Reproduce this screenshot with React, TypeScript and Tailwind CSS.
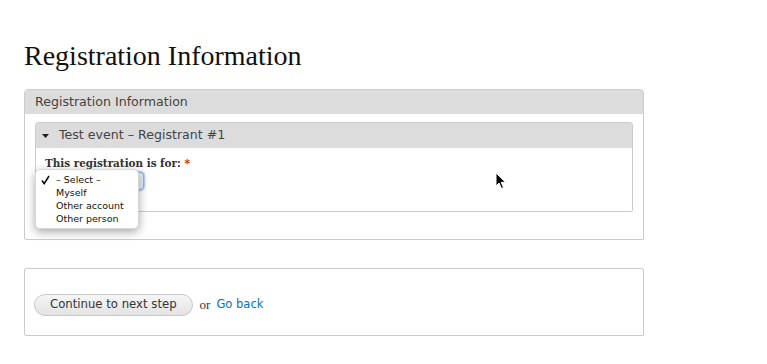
import React from "react";

const serif = { fontFamily: '"Liberation Serif", "DejaVu Serif", serif' };
const dserif = { fontFamily: '"DejaVu Serif", "Liberation Serif", serif' };

export default function App() {
  return (
    <div className="relative w-[767px] h-[364px] overflow-hidden bg-white text-[#333]" style={{ fontFamily: '"DejaVu Sans", "Noto Sans", sans-serif' }}>
      <div className="pl-[24px] pt-[40px] w-[644px]">
        <h1 className="text-[28px] leading-[32px] text-[#111]" style={serif}>Registration Information</h1>

        <div className="mt-[17px] border border-[#cccccc] rounded-t-[4px] rounded-b-[2px]">
          <div className="h-[24px] bg-[#dcdcdc] px-[10px] flex items-center text-[12.6px] text-[#444]">Registration Information</div>
          <div className="pt-[8px] px-[10px] pb-[27px]">
            <div className="border border-[#cccccc] rounded-t-[3px] rounded-b-[2px]">
              <div className="h-[25px] bg-[#dcdcdc] pl-[6px] flex items-center text-[12.6px] text-[#444]">
                <svg width="7" height="4" viewBox="0 0 7 4" className="mr-[10px]"><path d="M0 0H7L3.5 4Z" fill="#222" /></svg>
                <span>Test event – Registrant #1</span>
              </div>
              <div className="relative pl-[9px] pt-[8px] pb-[21px]">
                <div className="text-[10.4px] leading-[14px] font-bold text-[#333]" style={dserif}>
                  This registration is for: <span className="text-[#e00]">*</span>
                </div>
                <div className="mt-[2px] w-[99px] h-[18px] rounded-[4px] border border-[#8fb3e0] bg-[#e8eef8] shadow-[0_0_2px_1px_#9ec0ef]" />
                <div className="absolute left-[-1px] top-[21px] w-[104px] py-[3px] bg-white rounded-[5px] shadow-[0_3px_10px_rgba(0,0,0,0.35)] border border-[#d8d8d8] text-[9.5px] leading-[13px] text-[#111]">
                  <div className="flex items-center">
                    <span className="w-[20px] pl-[5px] flex items-center">
                      <svg width="9" height="10" viewBox="0 0 9 10"><path d="M1 5.5 L3.2 8.6 L8 1" fill="none" stroke="#000" strokeWidth="1.5" /></svg>
                    </span>
                    <span>– Select –</span>
                  </div>
                  <div className="pl-[20px]">Myself</div>
                  <div className="pl-[20px]">Other account</div>
                  <div className="pl-[20px]">Other person</div>
                </div>
              </div>
            </div>
          </div>
        </div>

        <div className="mt-[28px] h-[68px] border border-[#cccccc] rounded-[2px] flex items-center px-[9px] pt-[6px]">
          <button className="h-[22px] px-[15px] rounded-full border border-[#c8c8c8] bg-gradient-to-b from-[#f6f6f6] to-[#e3e3e3] text-[11.7px] text-[#333]">
            Continue to next step
          </button>
          <span className="ml-[7px] text-[13px] text-[#333]" style={serif}>or</span>
          <a className="ml-[6px] text-[11.5px] text-[#0074bd]">Go back</a>
        </div>
      </div>

      <svg className="absolute left-[495px] top-[172px]" width="12" height="18" viewBox="0 0 12 18">
        <path d="M1 1 L1 14 L4 11 L6.5 16.5 L8.5 15.6 L6.2 10.3 L10.5 10.3 Z" fill="#000" stroke="#fff" strokeWidth="1" />
      </svg>
    </div>
  );
}
